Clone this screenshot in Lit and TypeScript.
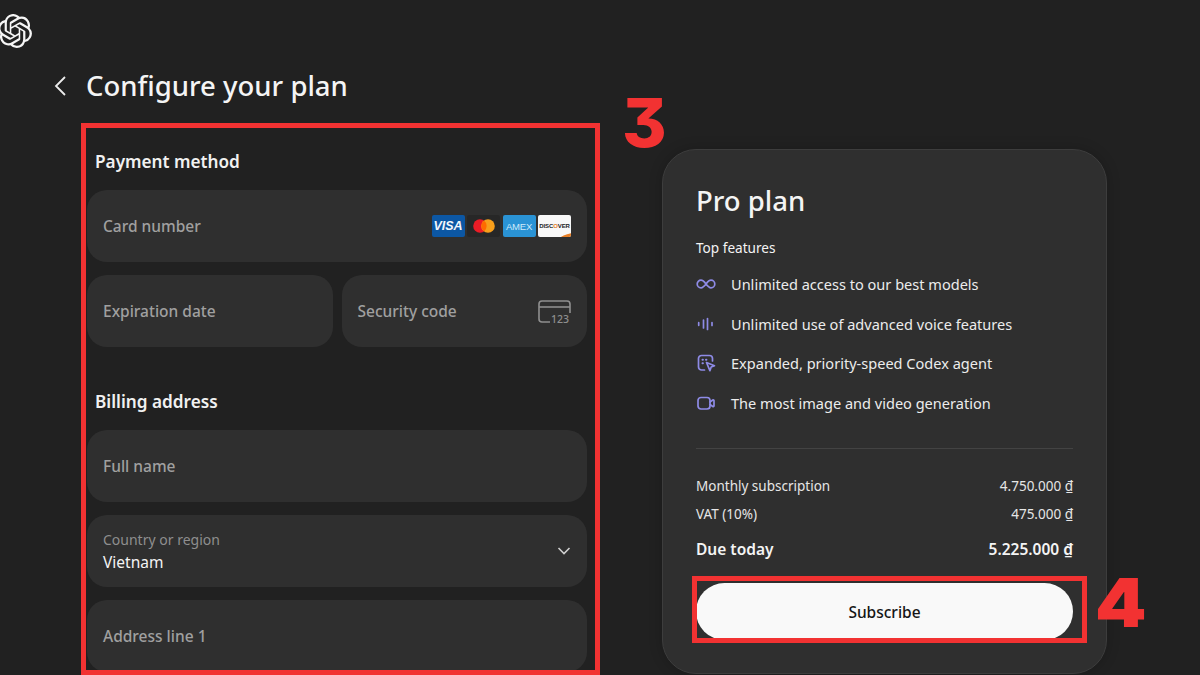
import { LitElement, html, css, svg } from "lit";
import { customElement } from "lit/decorators.js";

const LOGO = "M22.2819 9.8211a5.9847 5.9847 0 0 0-.5157-4.9108 6.0462 6.0462 0 0 0-6.5098-2.9A6.0651 6.0651 0 0 0 4.9807 4.1818a5.9847 5.9847 0 0 0-3.9977 2.9 6.0462 6.0462 0 0 0 .7427 7.0966 5.98 5.98 0 0 0 .511 4.9107 6.051 6.051 0 0 0 6.5146 2.9001A5.9847 5.9847 0 0 0 13.2599 24a6.0557 6.0557 0 0 0 5.7718-4.2058 5.9894 5.9894 0 0 0 3.9977-2.9001 6.0557 6.0557 0 0 0-.7475-7.0729zm-9.022 12.6081a4.4755 4.4755 0 0 1-2.8764-1.0408l.1419-.0804 4.7783-2.7582a.7948.7948 0 0 0 .3927-.6813v-6.7369l2.02 1.1686a.071.071 0 0 1 .038.052v5.5826a4.504 4.504 0 0 1-4.4945 4.4944zm-9.6607-4.1254a4.4708 4.4708 0 0 1-.5346-3.0137l.142.0852 4.783 2.7582a.7712.7712 0 0 0 .7806 0l5.8428-3.3685v2.3324a.0804.0804 0 0 1-.0332.0615L9.74 19.9502a4.4992 4.4992 0 0 1-6.1408-1.6464zM2.3408 7.8956a4.485 4.485 0 0 1 2.3655-1.9728V11.6a.7664.7664 0 0 0 .3879.6765l5.8144 3.3543-2.0201 1.1685a.0757.0757 0 0 1-.071 0l-4.8303-2.7865A4.504 4.504 0 0 1 2.3408 7.872zm16.5963 3.8558L13.1038 8.364 15.1192 7.2a.0757.0757 0 0 1 .071 0l4.8303 2.7913a4.4944 4.4944 0 0 1-.6765 8.1042v-5.6772a.79.79 0 0 0-.407-.667zm2.0107-3.0231l-.142-.0852-4.7735-2.7818a.7759.7759 0 0 0-.7854 0L9.409 9.2297V6.8974a.0662.0662 0 0 1 .0284-.0615l4.8303-2.7866a4.4992 4.4992 0 0 1 6.6802 4.66zM8.3065 12.863l-2.02-1.1638a.0804.0804 0 0 1-.038-.0567V6.0742a4.4992 4.4992 0 0 1 7.3757-3.4537l-.142.0805L8.704 5.459a.7948.7948 0 0 0-.3927.6813zm1.0976-2.3654l2.602-1.4998 2.6069 1.4998v2.9994l-2.5974 1.4997-2.6067-1.4997Z";

const FEATURE_ICONS = [
  svg`<path d="M10 10C8.500 8 7 6.200 5 6.200a3.800 3.800 0 0 0 0 7.600c2 0 3.500-1.800 5-3.800s3-3.800 5-3.800a3.800 3.800 0 0 1 0 7.600c-2 0-3.500-1.800-5-3.800z"/>`,
  svg`<path d="M2.700 8.700v2.600M7.500 6v8M11.500 4.500v11M16 8.500v3"/>`,
  svg`<path d="M8.500 17H5.500A3 3 0 0 1 2.500 14V5.500a3 3 0 0 1 3-3h8a3 3 0 0 1 3 3V8"/><path d="M10.500 9.500l8 3.200-3.300 1.300-1.300 3.700z"/><path d="M6.500 6.800h.4M10 6.800h.4M6.500 10.300h.4" stroke-width="2"/>`,
  svg`<rect x="2" y="4.500" width="12" height="11.500" rx="3"/><path d="M14 9l2.800-2a.8.8 0 0 1 1.200.6v5.300a.8.8 0 0 1-1.200.6L14 11.500"/>`,
];

const FEATURES = [
  "Unlimited access to our best models",
  "Unlimited use of advanced voice features",
  "Expanded, priority-speed Codex agent",
  "The most image and video generation",
];

@customElement("app-root")
export class AppRoot extends LitElement {
  static styles = css`
    :host {
      display: block;
      position: relative;
      width: 1200px;
      height: 675px;
      overflow: hidden;
      background: #212121;
      color: #f4f4f4;
      font-family: "Noto Sans", "Open Sans", sans-serif;
    }
    .logo {
      display: block;
      width: 34px;
      height: 34px;
      margin-top: 14px;
      margin-left: -2px;
      fill: #f5f5f5;
    }
    .head {
      display: flex;
      align-items: center;
      height: 44px;
      margin-top: 16px;
      margin-left: 53px;
      gap: 19px;
    }
    .back {
      width: 14px;
      height: 22px;
      fill: none;
      stroke: #ececec;
      stroke-width: 1.800;
    }
    h1 {
      margin: 0;
      font-size: 27.500px;
      font-weight: 500;
      line-height: 44px;
      white-space: nowrap;
    }
    .main {
      display: flex;
      align-items: flex-start;
      margin-left: 87px;
      margin-top: 10px;
    }
    .form {
      width: 500px;
      flex: none;
      display: flex;
      flex-direction: column;
    }
    h2 {
      margin: 0 0 0 8px;
      font-size: 17.200px;
      font-weight: 600;
      line-height: 24px;
      color: #f1f1f1;
    }
    .pm { margin-top: 32px; margin-bottom: 16px; }
    .ba { margin-top: 42px; margin-bottom: 16px; }
    .field {
      height: 72px;
      flex: none;
      box-sizing: border-box;
      background: #2f2f2f;
      border-radius: 20px;
      padding: 0 16px;
      display: flex;
      align-items: center;
      justify-content: space-between;
      font-size: 15.500px;
      font-weight: 500;
      color: #a0a0a0;
      margin-bottom: 13px;
      white-space: nowrap;
    }
    .split {
      display: flex;
      gap: 9px;
      height: 73px;
    }
    .split .field { flex: 1; min-width: 0; margin: 0; }
    .brands { display: flex; gap: 2.500px; }
    .brand {
      width: 33px;
      height: 22px;
      border-radius: 2px;
      display: flex;
      align-items: center;
      justify-content: center;
      font-family: "Liberation Sans", sans-serif;
      font-weight: 700;
      overflow: hidden;
      position: relative;
    }
    .visa { background: #0c57a4; color: #f2f6fb; font-size: 12.500px; font-style: italic; }
    .mc { background: #272727; }
    .mc svg { width: 26px; height: 16px; }
    .amex { background: #2a93d5; color: #cfeafa; font-size: 9.500px; font-weight: 400; letter-spacing: -.2px; }
    .disc { background: #f8f8f8; color: #222; font-size: 6px; letter-spacing: -.1px; }
    .disc b { color: #e77f26; }
    .disc::after {
      content: "";
      position: absolute;
      right: -7px;
      bottom: -3px;
      width: 20px;
      height: 6px;
      background: #e77f26;
      border-radius: 50%;
      transform: rotate(-18deg);
    }
    .cvc { width: 33px; height: 23px; overflow: visible; }
    .cvc-text {
      font-family: "Noto Sans", sans-serif;
      font-size: 10.500px;
      font-weight: 500;
      fill: #8f8f8f;
    }
    .country { align-items: center; color: #f4f4f4; }
    .country-text { display: flex; flex-direction: column; gap: 1px; }
    .country-label { font-size: 14px; line-height: 20px; color: #8e8e8e; font-weight: 400; }
    .country-value { font-size: 15.500px; line-height: 22px; font-weight: 400; color: #f4f4f4; }
    .chev { width: 14px; height: 10px; fill: none; stroke: #cfcfcf; stroke-width: 1.600; }
    .card {
      margin-left: 75px;
      margin-top: 31px;
      width: 445px;
      height: 525px;
      flex: none;
      box-sizing: border-box;
      background: #2f2f2f;
      border: 1px solid #3d3d3d;
      border-radius: 34px;
      padding: 31px 33px 0;
      box-shadow: 0 0 14px rgba(0, 0, 0, .2);
    }
    .card h3 {
      margin: 0;
      font-size: 27.500px;
      font-weight: 500;
      line-height: 40px;
    }
    .top { margin-top: 16px; font-size: 13.600px; line-height: 22px; }
    .features { margin-top: 5px; display: flex; flex-direction: column; }
    .feature {
      display: flex;
      align-items: center;
      gap: 15px;
      height: 39.700px;
      font-size: 14.550px;
      color: #ececec;
      white-space: nowrap;
    }
    .feature svg {
      width: 20px;
      height: 20px;
      flex: none;
      fill: none;
      stroke: #8e8be6;
      stroke-width: 1.700;
      stroke-linecap: round;
      stroke-linejoin: round;
    }
    .divider { height: 1px; background: #434343; margin: 25px 0 25px; }
    .line {
      display: flex;
      justify-content: space-between;
      font-size: 13.500px;
      line-height: 24px;
      color: #e6e6e6;
      height: 28px;
    }
    .due {
      margin-top: 7px;
      font-size: 15.500px;
      font-weight: 600;
      color: #f4f4f4;
    }
    .sub {
      display: flex;
      align-items: center;
      justify-content: center;
      box-sizing: border-box;
      padding-top: 2px;
      margin-top: 18px;
      width: 377px;
      height: 57px;
      border-radius: 29px;
      background: #f9f9f9;
      color: #161616;
      font-size: 15.500px;
      font-weight: 500;
    }
    .box {
      position: absolute;
      box-sizing: border-box;
      border: 5px solid #f23232;
    }
    .box3 { left: 81px; top: 123px; width: 519px; height: 552px; }
    .box4 { left: 692px; top: 576px; width: 395px; height: 67px; }
    .num {
      position: absolute;
      font-family: Inter, sans-serif;
      font-feature-settings: "cv09";
      font-size: 68px;
      line-height: 68px;
      color: #f23232;
    }
    .n3 { left: 622px; top: 88px; font-weight: 800; }
    .n4 { left: 1095px; top: 568px; font-weight: 900; transform: scaleX(1.080); transform-origin: left; }
  `;

  render() {
    return html`
      <svg class="logo" viewBox="0 0 24 24"><path d=${LOGO}></path></svg>
      <div class="head">
        <svg class="back" viewBox="0 0 14 22"><path d="M12 2 3 11l9 9"></path></svg>
        <h1>Configure your plan</h1>
      </div>
      <div class="main">
        <section class="form">
          <h2 class="pm">Payment method</h2>
          <div class="field">
            <span>Card number</span>
            <div class="brands">
              <div class="brand visa">VISA</div>
              <div class="brand mc">
                <svg viewBox="0 0 26 16">
                  <circle cx="9" cy="8" r="6.800" fill="#eb1c26"></circle>
                  <circle cx="17" cy="8" r="6.800" fill="#f79e1b"></circle>
                  <path d="M13 2.600a6.800 6.800 0 0 1 0 10.800 6.800 6.800 0 0 1 0-10.800z" fill="#ff6a00"></path>
                </svg>
              </div>
              <div class="brand amex">AMEX</div>
              <div class="brand disc"><span>DISC<b>O</b>VER</span></div>
            </div>
          </div>
          <div class="split">
            <div class="field"><span>Expiration date</span></div>
            <div class="field">
              <span>Security code</span>
              <svg class="cvc" viewBox="0 0 33 23" fill="none" stroke="#8f8f8f" stroke-width="1.600">
                <path d="M12 22H4a3 3 0 0 1-3-3V4a3 3 0 0 1 3-3h25a3 3 0 0 1 3 3v9"></path>
                <path d="M1 7h31"></path>
                <text class="cvc-text" x="13" y="23" stroke="none">123</text>
              </svg>
            </div>
          </div>
          <h2 class="ba">Billing address</h2>
          <div class="field"><span>Full name</span></div>
          <div class="field country">
            <div class="country-text">
              <span class="country-label">Country or region</span>
              <span class="country-value">Vietnam</span>
            </div>
            <svg class="chev" viewBox="0 0 14 10"><path d="M1.500 2l5.500 5.500L12.500 2"></path></svg>
          </div>
          <div class="field"><span>Address line 1</span></div>
        </section>
        <aside class="card">
          <h3>Pro plan</h3>
          <div class="top">Top features</div>
          <div class="features">
            ${FEATURES.map(
              (f, i) => html`<div class="feature">
                <svg viewBox="0 0 20 20">${FEATURE_ICONS[i]}</svg>
                <span>${f}</span>
              </div>`
            )}
          </div>
          <div class="divider"></div>
          <div class="line"><span>Monthly subscription</span><span>4.750.000 ₫</span></div>
          <div class="line"><span>VAT (10%)</span><span>475.000 ₫</span></div>
          <div class="line due"><span>Due today</span><span>5.225.000 ₫</span></div>
          <div class="sub">Subscribe</div>
        </aside>
      </div>
      <div class="box box3"></div>
      <div class="box box4"></div>
      <div class="num n3">3</div>
      <div class="num n4">4</div>
    `;
  }
}
